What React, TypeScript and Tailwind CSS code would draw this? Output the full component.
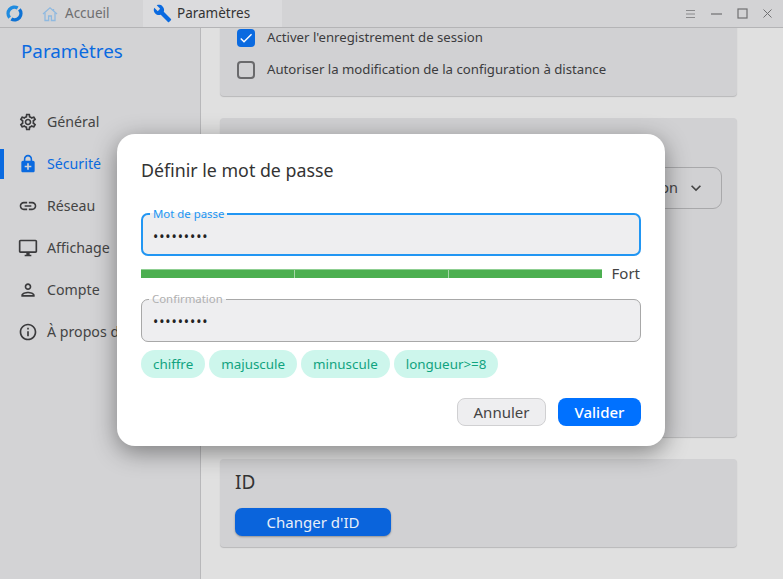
import React from "react";
import { MdBuild, MdEnhancedEncryption, MdLink, MdOutlineDesktopWindows, MdOutlinePerson, MdInfoOutline, MdOutlineSettings, MdKeyboardArrowDown, MdCheck } from "react-icons/md";

const nav = [
  { label: "Général", Icon: MdOutlineSettings },
  { label: "Sécurité", Icon: MdEnhancedEncryption, active: true },
  { label: "Réseau", Icon: MdLink },
  { label: "Affichage", Icon: MdOutlineDesktopWindows },
  { label: "Compte", Icon: MdOutlinePerson },
  { label: "À propos de RustDesk", Icon: MdInfoOutline },
];

function Logo() {
  return (
    <svg width="17" height="17" viewBox="0 0 16 16" fill="none">
      <path d="M3.400 11.860A6 6 0 0 1 11 2.800" stroke="#1f8be0" strokeWidth="3.200" />
      <path d="M12.600 4.140A6 6 0 0 1 5 13.200" stroke="#0f72d4" strokeWidth="3.200" />
    </svg>
  );
}

function Home() {
  return (
    <svg width="16" height="16" viewBox="0 0 16 16" fill="none" stroke="#8fb9e0" strokeWidth="1.300">
      <path d="M1 8l7-6.200L15 8" />
      <path d="M3 7v7.500h3.600V10h2.800v4.500H13V7" />
      <path d="M11.500 3V5" />
    </svg>
  );
}

function Field({ label, focused }: { label: string; focused?: boolean }) {
  return (
    <fieldset
      className={
        focused
          ? "h-[49px] rounded-[7px] border-2 border-[#2196f3] bg-[#eeeef0] px-[10px]"
          : "h-[50px] rounded-[7px] border border-[#a8a8a8] bg-[#eeeef0] px-[11px]"
      }
    >
      <legend className={focused ? "-ml-[3px] px-[3px] text-[11.400px] leading-[14px] text-[#2196f3]" : "-ml-[4px] px-[3px] text-[11.400px] leading-[14px] text-[#b0b0b0]"}>
        {label}
      </legend>
      <div className="pt-[7px] text-[14px] leading-[17px] tracking-[0.900px] text-[#222]">•••••••••</div>
    </fieldset>
  );
}

export default function App() {
  return (
    <div className="relative flex h-[579px] w-[783px] flex-col overflow-hidden bg-[#e0e0e0] font-['Noto_Sans',sans-serif] text-[#333]">
      <header className="flex h-[28px] shrink-0 items-center border-b border-[#b4b4b6] bg-[#d3d3d5]">
        <div className="flex w-[28px] justify-center pl-[1px]"><Logo /></div>
        <div className="flex h-full w-[115px] items-center gap-[7px] pl-[14px] text-[13.500px] text-[#6e6e70]">
          <Home />
          <span>Accueil</span>
        </div>
        <div className="flex h-full w-[139px] items-center gap-[5px] bg-[#dbdbdd] pl-[10px] text-[13.500px] text-[#333]">
          <MdBuild size={19} color="#0a6ae0" />
          <span>Paramètres</span>
        </div>
        <div className="ml-auto flex items-center gap-[14px] pr-[10px] text-[#707072]">
          <svg width="11" height="10" viewBox="0 0 11 10" stroke="#8a8a8c" strokeWidth="1"><path d="M1 1.500h9M1 5h9M1 8.500h9" /></svg>
          <svg width="13" height="10" viewBox="0 0 13 10" stroke="#707072" strokeWidth="1.200"><path d="M1 5h11" /></svg>
          <svg width="11" height="11" viewBox="0 0 11 11" fill="none" stroke="#707072" strokeWidth="1.200"><rect x="1" y="1" width="9" height="9" /></svg>
          <svg width="11" height="11" viewBox="0 0 11 11" stroke="#707072" strokeWidth="1"><path d="M1.500 1.500l8 8M9.500 1.500l-8 8" /></svg>
        </div>
      </header>

      <div className="flex min-h-0 flex-1">
        <aside className="w-[201px] shrink-0 border-r border-[#b8b8ba] bg-[#d3d3d5]">
          <h1 className="pl-[21px] pt-[10px] text-[18.800px] leading-[26px] text-[#0a6ae0]">Paramètres</h1>
          <nav className="mt-[37px] flex flex-col">
            {nav.map(({ label, Icon, active }) => (
              <div key={label} className={active ? "flex h-[42px] items-center whitespace-nowrap text-[14.200px] text-[#0a6ae0]" : "flex h-[42px] items-center whitespace-nowrap text-[14.200px] text-[#444]"}>
                <span className={active ? "h-[30px] w-[4px] bg-[#0a6ae0]" : "h-[30px] w-[4px]"} />
                <span className="ml-[14px] mr-[9px] flex w-[20px] justify-center">
                  <Icon size={20} color={active ? "#0a6ae0" : "#3a3a3c"} />
                </span>
                <span>{label}</span>
              </div>
            ))}
          </nav>
        </aside>

        <main className="flex min-w-0 flex-1 flex-col gap-[22px] overflow-hidden pl-[19px] pr-[46px]">
          <section className="-mt-[10px] h-[78px] shrink-0 rounded-[4px] bg-[#d1d1d3] pl-[17px] pt-[4px] shadow-[0_1px_1px_#b8b8ba]">
            <div className="flex h-[32px] items-center gap-[12px] text-[13.200px] text-[#3c3c3e]">
              <span className="flex size-[18px] items-center justify-center rounded-[4px] bg-[#0a6ae0]"><MdCheck size={16} color="#fff" /></span>
              <span>Activer l'enregistrement de session</span>
            </div>
            <div className="flex h-[32px] items-center gap-[12px] text-[13.200px] text-[#3c3c3e]">
              <span className="size-[18px] rounded-[4px] border-2 border-[#6a6a6c]" />
              <span>Autoriser la modification de la configuration à distance</span>
            </div>
          </section>

          <section className="flex h-[319px] shrink-0 flex-col rounded-[4px] bg-[#d1d1d3] px-[15px] pt-[12px] shadow-[0_1px_1px_#b8b8ba]">
            <div className="text-[19px] leading-[27px] text-[#333]">Mot de passe</div>
            <div className="mt-[10px] flex h-[42px] w-[200px] items-center justify-end gap-[8px] self-end rounded-[9px] border border-[#a8a8aa] pr-[15px] text-[14.500px] text-[#444]">
              <span>Permission</span>
              <MdKeyboardArrowDown size={20} />
            </div>
          </section>

          <section className="h-[88px] shrink-0 rounded-[4px] bg-[#d1d1d3] px-[15px] pt-[10px] shadow-[0_1px_1px_#b8b8ba]">
            <div className="text-[19px] leading-[27px] text-[#333]">ID</div>
            <button className="mt-[12px] h-[28px] w-[156px] rounded-[7px] bg-[#0a64dc] text-[15px] text-[#e8eef8] shadow-[0_1px_2px_rgba(0,0,0,0.3)]">Changer d'ID</button>
          </section>
        </main>
      </div>

      <div className="absolute left-[117px] top-[134px] flex h-[312px] w-[548px] flex-col rounded-[18px] bg-white px-[24px] pt-[24px] shadow-[0_6px_24px_rgba(0,0,0,0.42)]">
        <h2 className="text-[17.800px] leading-[24px] text-[#333]">Définir le mot de passe</h2>
        <div className="mt-[25px]"><Field label="Mot de passe" focused /></div>
        <div className="mt-[7px] flex items-center gap-[10px]">
          <div className="flex h-[9px] flex-1 border-t border-[#8fcf92] bg-[#4caf50]">
            <div className="w-[154px] border-r border-[#a5d6a7]" />
            <div className="w-[154px] border-r border-[#a5d6a7]" />
          </div>
          <span className="pr-[1px] text-[15px] leading-[20px] text-[#444]">Fort</span>
        </div>
        <div className="mt-[9px]"><Field label="Confirmation" /></div>
        <div className="mt-[8px] flex gap-[4px]">
          {["chiffre", "majuscule", "minuscule", "longueur>=8"].map((t) => (
            <span key={t} className="flex h-[28px] items-center rounded-full bg-[#cdf6ec] px-[12px] text-[13.400px] text-[#10a37f]">{t}</span>
          ))}
        </div>
        <div className="mt-[20px] flex justify-end gap-[12px]">
          <button className="h-[28px] w-[89px] rounded-[8px] border border-[#d0d0d2] bg-[#eeeef0] text-[15px] text-[#444]">Annuler</button>
          <button className="h-[28px] w-[83px] rounded-[8px] bg-[#0071ff] text-[15px] font-medium text-white">Valider</button>
        </div>
      </div>
    </div>
  );
}
